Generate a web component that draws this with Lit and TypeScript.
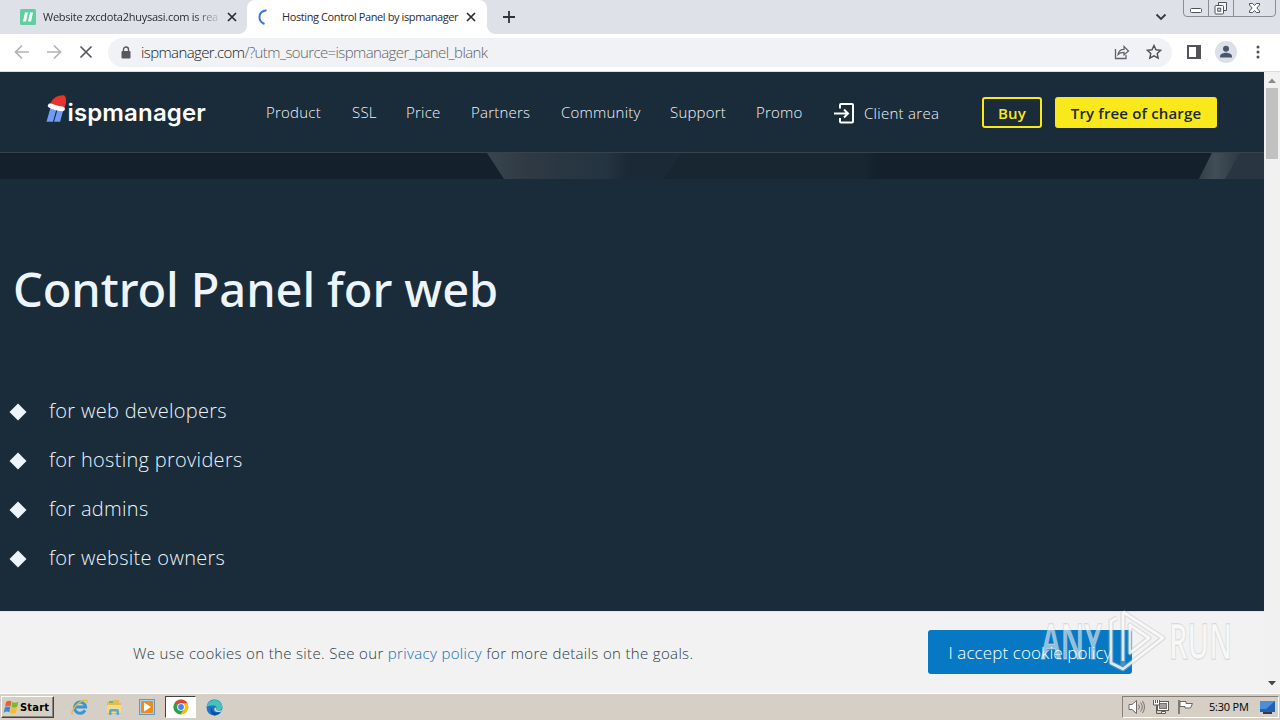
import { LitElement, css, html, svg } from "lit";
import { customElement, property } from "lit/decorators.js";

interface NavItem {
  label: string;
  width: number;
}

const NAV_ITEMS: NavItem[] = [
  { label: "Product", width: 56 },
  { label: "SSL", width: 24 },
  { label: "Price", width: 35 },
  { label: "Partners", width: 60 },
  { label: "Community", width: 79 },
  { label: "Support", width: 56 },
  { label: "Promo", width: 46 },
];

const AUDIENCES = [
  "for web developers",
  "for hosting providers",
  "for admins",
  "for website owners",
];

const cross = (size: number, stroke: number) => svg`
  <svg width=${size} height=${size} viewBox="0 0 10 10">
    <path d="M1 1L9 9M9 1L1 9" stroke="currentColor" stroke-width=${stroke} fill="none" />
  </svg>
`;

@customElement("browser-tabs")
export class BrowserTabs extends LitElement {
  render() {
    return html`
      <div class="tab">
        <svg width="16" height="16" viewBox="0 0 16 16">
          <rect width="16" height="16" rx="1.5" fill="#5fcf9f" />
          <path d="M5 3.500h3L6 12.500H3zM10 3.500h3l-2 9H8z" fill="#fff" />
        </svg>
        <span class="title faded">Website zxcdota2huysasi.com is rea</span>
        <span class="close">${cross(10, 1.7)}</span>
      </div>
      <div class="tab active">
        <svg width="16" height="16" viewBox="0 0 16 16">
          <path d="M8.500 1.200C-.5 2.500-.5 12 6.500 15" stroke="#3c78d8" stroke-width="2" fill="none" />
        </svg>
        <span class="title">Hosting Control Panel by ispmanager</span>
        <span class="close">${cross(10, 1.7)}</span>
      </div>
      <svg class="plus" width="12" height="12" viewBox="0 0 12 12">
        <path d="M6 0v12M0 6h12" stroke="#303238" stroke-width="1.8" />
      </svg>
      <svg class="chevron" width="12" height="8" viewBox="0 0 12 8">
        <path d="M1.500 1.500L6 6l4.500-4.500" stroke="#35383d" stroke-width="1.8" fill="none" />
      </svg>
      <svg class="controls" width="94" height="18" viewBox="0 0 94 18">
        <path
          d="M.5 0v13q0 3.500 3.500 3.500h85q3.500 0 3.500-3.500V0M25.500 0v16M50.500 0v16"
          stroke="#8a8d95"
          fill="none"
        />
        <rect x="7.500" y="8.500" width="11" height="4" rx="1" fill="#fff" stroke="#50535b" />
        <path d="M35.500 5.500v-3h8v8h-3" fill="#f6f6f8" stroke="#50535b" />
        <rect x="32" y="5.500" width="8.500" height="8.500" rx="1" fill="#fff" stroke="#50535b" />
        <rect x="34.700" y="8.200" width="3" height="3" fill="#dee1e6" stroke="#50535b" />
        <path
          d="M66.500 3.500h3.200l1.800 2 1.800-2h3.200v1.500L73.800 8l2.700 3v1.500h-3.200l-1.800-2-1.800 2h-3.200V11l2.700-3-2.700-3z"
          fill="#fff"
          stroke="#50535b"
        />
      </svg>
    `;
  }

  static styles = css`
    :host {
      display: flex;
      height: 34px;
      background: #dee1e8;
      color: #2a2c30;
      font: 11px "Open Sans", sans-serif;
    }
    svg {
      display: block;
      flex: none;
    }
    .tab {
      display: flex;
      align-items: center;
      box-sizing: border-box;
      width: 247px;
      height: 34px;
      padding-left: 20px;
    }
    .active {
      position: relative;
      width: 240px;
      padding-left: 11px;
      background: #fff;
      border-radius: 8px 8px 0 0;
    }
    .active::before,
    .active::after {
      content: "";
      position: absolute;
      bottom: 0;
      width: 8px;
      height: 8px;
    }
    .active::before {
      left: -8px;
      background: radial-gradient(circle at 0 0, transparent 7.5px, #fff 8px);
    }
    .active::after {
      right: -8px;
      background: radial-gradient(circle at 100% 0, transparent 7.5px, #fff 8px);
    }
    .title {
      width: 176px;
      margin-left: 7px;
      padding-bottom: 1px;
      overflow: hidden;
      white-space: nowrap;
      letter-spacing: -0.26px;
    }
    .active .title {
      margin-left: 8px;
      width: 178px;
      letter-spacing: -0.4px;
    }
    .faded {
      mask-image: linear-gradient(90deg, #000 86%, transparent 102%);
    }
    .close {
      margin-left: 8px;
    }
    .active .close {
      margin-left: 6px;
    }
    .plus {
      margin: 11px 0 0 16px;
    }
    .chevron {
      margin: 13px 0 0 auto;
    }
    .controls {
      margin: 0 3px 0 16px;
    }
  `;
}

@customElement("browser-toolbar")
export class BrowserToolbar extends LitElement {
  render() {
    return html`
      <svg class="nav" width="94" height="18" viewBox="0 0 94 18">
        <path d="M15 9H2M8 2.500L1.500 9l6.500 6.500" stroke="#b1b4b8" stroke-width="1.700" fill="none" />
        <path d="M33 9h13M40 2.500L46.500 9 40 15.500" stroke="#b1b4b8" stroke-width="1.700" fill="none" />
        <path d="M66.500 3.500l11 11M77.500 3.500l-11 11" stroke="#55585c" stroke-width="1.700" fill="none" />
      </svg>
      <div class="address">
        <svg class="lock" width="10" height="13" viewBox="0 0 10 13">
          <path d="M2.500 6V3.500a2.500 2.500 0 0 1 5 0V6" stroke="#55585d" stroke-width="1.400" fill="none" />
          <rect x="0.500" y="5" width="9" height="7.500" rx="1" fill="#55585d" />
        </svg>
        <span class="url">ispmanager.com<span class="path">/?utm_source=ispmanager_panel_blank</span></span>
        <svg class="share" width="16" height="15" viewBox="0 0 16 15">
          <path d="M1.500 4v9.500h10.500V10" stroke="#5f6368" stroke-width="1.300" fill="none" />
          <path
            d="M4 9.500c.6-3.800 2.800-5.200 6-5.200V1.500L14.500 6 10 10V7.400C7.400 7.400 5.500 8 4 9.500z"
            stroke="#5f6368"
            stroke-width="1.200"
            fill="none"
          />
        </svg>
        <svg class="star" width="16" height="16" viewBox="0 0 16 16">
          <path
            d="M8 1.500l2 4.300 4.700.5-3.500 3.200 1 4.700L8 11.800l-4.200 2.400 1-4.700L1.300 6.300l4.700-.5z"
            stroke="#4e5156"
            stroke-width="1.400"
            fill="none"
          />
        </svg>
      </div>
      <svg class="panel" width="14" height="14" viewBox="0 0 14 14">
        <rect x="1" y="1" width="12" height="12" stroke="#525458" stroke-width="2" fill="#fff" />
        <rect x="9" y="1" width="4" height="12" fill="#525458" />
      </svg>
      <svg class="avatar" width="22" height="22" viewBox="0 0 22 22">
        <circle cx="11" cy="11" r="11" fill="#dcdfe6" />
        <circle cx="11" cy="7.800" r="3" fill="#4a5370" />
        <path d="M5 16.500v-1.200c0-2.500 4-3.500 6-3.500s6 1 6 3.500v1.200z" fill="#4a5370" />
      </svg>
      <svg class="dots" width="4" height="14" viewBox="0 0 4 14">
        <g fill="#4e5156">
          <circle cx="2" cy="2" r="1.500" />
          <circle cx="2" cy="7" r="1.500" />
          <circle cx="2" cy="12" r="1.500" />
        </g>
      </svg>
    `;
  }

  static styles = css`
    :host {
      display: flex;
      align-items: center;
      box-sizing: border-box;
      height: 38px;
      padding-bottom: 1px;
      background: #fff;
      border-bottom: 1px solid #d9dde2;
    }
    svg {
      display: block;
      flex: none;
    }
    .nav {
      margin-left: 14px;
    }
    .address {
      display: flex;
      align-items: center;
      box-sizing: border-box;
      width: 1064px;
      height: 29px;
      padding-left: 13px;
      background: #f0f2f5;
      border-radius: 15px;
    }
    .url {
      margin-left: 10px;
      color: #202124;
      font: 300 15px "Open Sans", sans-serif;
      letter-spacing: -0.61px;
    }
    .path {
      color: #5f6368;
    }
    .share {
      margin-left: auto;
    }
    .star {
      margin: 0 10px 0 16px;
    }
    .panel {
      margin-left: 15px;
    }
    .avatar {
      margin-left: 14px;
    }
    .dots {
      margin-left: 19px;
    }
  `;
}

@customElement("site-header")
export class SiteHeader extends LitElement {
  render() {
    return html`
      <div class="logo">
        <svg width="22" height="32" viewBox="0 0 22 32">
          <path d="M4.500 14h6.500L7.200 28H0.500zM12 15h6l-3.500 13H8.300z" fill="#6f9bf5" />
          <path d="M4 12C5 4.500 12 .5 18.500 1c3 2.500 2.500 8 0 14z" fill="#e5352d" />
          <path
            d="M3 9.500C5.500 8.500 9 11.500 17 12.500c3.500 1 3 5-.5 4.700C11 16.600 7 16 3 13.500 1.300 12.500 1.500 10.500 3 9.500z"
            fill="#fff"
          />
        </svg>
        <span>ispmanager</span>
      </div>
      <nav>
        ${NAV_ITEMS.map(
          (item) => html`<a style="width:${item.width}px">${item.label}</a>`
        )}
      </nav>
      <div class="client">
        <svg width="22" height="22" viewBox="0 0 22 22">
          <path
            d="M7 6.500V3q0-1 1-1h11q1 0 1 1v16.500q0 1-1 1H8q-1 0-1-1V16M1 11.500h14M11 7.500l4 4-4 4"
            stroke="#fff"
            stroke-width="2"
            fill="none"
          />
        </svg>
        <span>Client area</span>
      </div>
      <a class="button buy">Buy</a>
      <a class="button try">Try free of charge</a>
    `;
  }

  static styles = css`
    :host {
      display: flex;
      align-items: center;
      box-sizing: border-box;
      height: 81px;
      background: #1a2b39;
      border-bottom: 1px solid #35434f;
      color: #f1f6fa;
      font: 300 15px "Open Sans", sans-serif;
      letter-spacing: 0.22px;
    }
    .logo {
      display: flex;
      flex: none;
      width: 160px;
      height: 36px;
      margin-left: 46px;
      color: #fff;
      font: 600 24px/38px Inter, sans-serif;
      letter-spacing: 0.15px;
    }
    nav {
      display: flex;
      gap: 30px;
      margin-left: 60px;
    }
    nav a {
      white-space: nowrap;
    }
    .client {
      display: flex;
      align-items: center;
      gap: 9px;
      width: 149px;
      margin: 2px 0 0 31px;
      white-space: nowrap;
      letter-spacing: 0.28px;
    }
    .button {
      box-sizing: border-box;
      height: 31px;
      border: 2px solid #f9e81c;
      border-radius: 3px;
      color: #f9e81c;
      font: 600 15px/29px "Open Sans", sans-serif;
      letter-spacing: 0.16px;
      text-align: center;
      white-space: nowrap;
    }
    .buy {
      width: 60px;
    }
    .try {
      width: 162px;
      margin-left: 13px;
      background: #f9e81c;
      color: #1a2b39;
    }
  `;
}

@customElement("cookie-bar")
export class CookieBar extends LitElement {
  render() {
    return html`
      <p>
        We use cookies on the site. See our <a>privacy policy</a> for more
        details on the goals.
      </p>
      <button>I accept cookie policy</button>
    `;
  }

  static styles = css`
    :host {
      display: flex;
      align-items: center;
      box-sizing: border-box;
      height: 82px;
      padding: 0 132px 2px;
      background: #f2f2f2;
      border-top: 1px solid #dfe4ec;
      color: #2c3a46;
      font: 300 15px "Open Sans", sans-serif;
    }
    p {
      flex: none;
      width: 796px;
      margin: 2px 0 0;
      text-indent: 1px;
      white-space: nowrap;
      letter-spacing: 0.34px;
    }
    a {
      color: #0e70b8;
    }
    button {
      flex: none;
      width: 204px;
      height: 44px;
      padding: 2px 0 0;
      border: 0;
      border-radius: 3px;
      background: #0779c4;
      color: #fff;
      font: 300 17px "Open Sans", sans-serif;
      letter-spacing: 0.1px;
      white-space: nowrap;
    }
  `;
}

@customElement("task-bar")
export class TaskBar extends LitElement {
  @property({ type: String }) time = "5:30 PM";

  render() {
    return html`
      <div class="start">
        <svg width="17" height="16" viewBox="0 0 17 16">
          <path d="M3 3c2-1.500 3.500-1.500 5.500-.5L7.500 7.500C5.500 6.500 4 6.500 2 8z" fill="#e8602c" />
          <path d="M9.300 3c2 1 4 1 6-.3l-1 5c-2 1.300-4 1.300-6 .3z" fill="#7ab83a" />
          <path d="M1.800 8.800c2-1.500 3.500-1.500 5.500-.5l-1 5C4.300 12.300 2.800 12.300.8 13.800z" fill="#3c87d2" />
          <path d="M8.100 8.800c2 1 4 1 6-.3l-1 5c-2 1.300-4 1.300-6 .3z" fill="#f6bd26" />
        </svg>
        <span>Start</span>
      </div>
      <svg class="ie" width="18" height="18" viewBox="0 0 18 18">
        <path d="M14 12.300A5.600 5.600 0 1 1 14.600 9H5" stroke="#3598d4" stroke-width="3" fill="none" />
        <path d="M2 15.500C-1 17 2 10 7 5.500 12 1.500 17.500.5 16 5" stroke="#e9b93a" stroke-width="1.300" fill="none" />
      </svg>
      <svg class="folder" width="18" height="18" viewBox="0 0 18 18">
        <path d="M2 4h5l1-2h6v3h2v11H2z" fill="#e0bd55" />
        <rect x="4" y="3" width="4" height="2" fill="#6fb566" />
        <path d="M2 7h14v8H2z" fill="#f3dc88" />
        <path d="M4 17v-4q0-2 2-2h6q2 0 2 2v4h-2.500v-3.500h-5V17z" fill="#5ba7d6" />
      </svg>
      <svg class="player" width="16" height="16" viewBox="0 0 16 16">
        <rect x="0.500" y="0.500" width="15" height="15" fill="#a9cfee" stroke="#6099c8" />
        <rect x="2" y="2" width="12" height="12" rx="1" fill="#ef8a1d" />
        <path d="M5 3.500l7 4.500-7 4.500z" fill="#fff" />
      </svg>
      <div class="running">
        <svg width="16" height="16" viewBox="0 0 16 16">
          <circle cx="8" cy="8" r="7.500" fill="#f4c20d" />
          <path d="M8 8L1.500 4.200A7.500 7.500 0 0 1 14.500 4.200H8z" fill="#db4437" />
          <path d="M8 8L1.500 4.200A7.500 7.500 0 0 0 7.500 15.500L11 10z" fill="#2f9e4f" />
          <circle cx="8" cy="8" r="3.800" fill="#fff" />
          <circle cx="8" cy="8" r="2.900" fill="#4285f4" />
        </svg>
      </div>
      <svg class="edge" width="17" height="17" viewBox="0 0 17 17">
        <circle cx="8.500" cy="8.500" r="8" fill="#1b76c8" />
        <path d="M.7 7.500A8 8 0 0 1 16.500 8c0 3-4 4.500-6.500 3 1.500-2.500 0-4.500-2.500-4.500S2 7 .7 7.500z" fill="#43c4b8" />
        <path d="M6 8.500c-1 4 3 6.500 8 4.500a8 8 0 0 1-5 3.400C5 15.500 3.500 11 6 8.500z" fill="#124c96" />
        <path d="M9 8.500c1.500 0 1.500 1.200 1 2.300 1.500 1.200 4.500 1.200 6.500-.3l-1 2c-3 1.200-7 .5-7.200-2 0-.8.200-1.600.7-2z" fill="#d5cfc6" />
      </svg>
      <div class="tray">
        <svg width="18" height="16" viewBox="0 0 18 16">
          <path d="M1 5.500h3L8.500 1.500v13L4 10.500H1z" fill="#fff" stroke="#6a6864" />
          <path d="M10.500 5.500q2 2.500 0 5M12.500 3.500q3.500 4.500 0 9M14.500 2q4 6 0 12" stroke="#77746f" fill="none" />
        </svg>
        <svg width="17" height="16" viewBox="0 0 17 16">
          <rect x="4.500" y="2.500" width="11" height="9" fill="#fff" stroke="#5d5b57" />
          <rect x="6.500" y="4.500" width="7" height="5" fill="#a3a29f" stroke="#77746f" />
          <path d="M.5 1h6v5h-6z" fill="#fff" />
          <path d="M.5 1v5h6V1M2.500 1v3M4.500 1v3M3.500 6v8.500h5" fill="none" stroke="#5d5b57" />
          <path d="M8.500 14.500v-2h4v2z" fill="#fff" stroke="#5d5b57" />
        </svg>
        <svg width="17" height="16" viewBox="0 0 17 16">
          <path d="M2 1v14" stroke="#55534f" stroke-width="1.300" />
          <path d="M3 2.500h6v2h6.500L13.500 9H8V7.500H3z" fill="#fff" stroke="#6a6864" />
        </svg>
        <span>${this.time}</span>
        <svg class="desktop" width="15" height="13" viewBox="0 0 15 13">
          <rect width="15" height="11" fill="#2260b4" />
          <path d="M0 0h15L6 8H0z" fill="#4d8ed8" />
          <rect x="3" y="11" width="9" height="2" fill="#38393c" />
        </svg>
      </div>
    `;
  }

  static styles = css`
    :host {
      display: flex;
      align-items: center;
      box-sizing: border-box;
      height: 27px;
      padding: 0 1px;
      background: #d5cfc6;
      border-top: 1px solid #fff;
      color: #000;
      font: 11px "Open Sans", sans-serif;
    }
    svg {
      display: block;
      flex: none;
    }
    .start {
      display: flex;
      align-items: center;
      box-sizing: border-box;
      width: 53px;
      height: 22px;
      padding-left: 1px;
      border: 1px solid;
      border-color: #fff #45433f #45433f #fff;
      box-shadow: inset -1px -1px #8b8780;
      font: bold 11px "DejaVu Sans Condensed", "DejaVu Sans", sans-serif;
      letter-spacing: 0.2px;
    }
    .ie {
      margin-left: 17px;
    }
    .folder {
      margin-left: 16px;
    }
    .player {
      margin-left: 16px;
    }
    .running {
      display: flex;
      align-items: center;
      justify-content: center;
      box-sizing: border-box;
      width: 31px;
      height: 22px;
      margin-left: 10px;
      background: #fff;
      border: 1px solid;
      border-color: #45433f #fff #fff #45433f;
    }
    .edge {
      margin-left: 10px;
    }
    .tray {
      display: flex;
      align-items: center;
      box-sizing: border-box;
      width: 157px;
      height: 22px;
      margin-left: auto;
      padding-left: 5px;
      gap: 7px;
      border: 1px solid;
      border-color: #85817a #fff #fff #85817a;
    }
    .tray span {
      width: 41px;
      margin: -1px 0 0 8px;
      white-space: nowrap;
      letter-spacing: -0.2px;
    }
    .desktop {
      margin-left: 3px;
    }
  `;
}

@customElement("app-root")
export class AppRoot extends LitElement {
  render() {
    return html`
      <browser-tabs></browser-tabs>
      <browser-toolbar></browser-toolbar>
      <div class="viewport">
        <div class="page">
          <site-header></site-header>
          <div class="banner">
            <svg width="1264" height="26" viewBox="0 0 1264 26">
              <defs>
                <linearGradient id="slab">
                  <stop offset="0" stop-color="#38444e" />
                  <stop offset="0.3" stop-color="#2e3944" />
                  <stop offset="0.85" stop-color="#243440" />
                  <stop offset="1" stop-color="#1a2935" />
                </linearGradient>
                <linearGradient id="haze">
                  <stop offset="0" stop-color="#172631" />
                  <stop offset="0.95" stop-color="#172631" />
                  <stop offset="1" stop-color="#14202c" />
                </linearGradient>
                <linearGradient id="edge">
                  <stop offset="0" stop-color="#323f49" />
                  <stop offset="0.4" stop-color="#424e57" />
                  <stop offset="1" stop-color="#2c3843" />
                </linearGradient>
              </defs>
              <rect width="1264" height="26" fill="#14202c" />
              <path d="M560 0h320v26H560z" fill="url(#haze)" />
              <path d="M620 0h62l-18 26h-44z" fill="#1a2935" />
              <path d="M487 0h140v26H504z" fill="url(#slab)" />
              <path d="M1212 0h52v26h-65z" fill="#293541" />
              <path d="M1212 0h28l-15 26h-26z" fill="url(#edge)" />
            </svg>
          </div>
          <main>
            <h1>Control Panel for web</h1>
            <ul>
              ${AUDIENCES.map((audience) => html`<li>${audience}</li>`)}
            </ul>
          </main>
          <cookie-bar></cookie-bar>
        </div>
        <div class="scrollbar">
          <svg width="8" height="5" viewBox="0 0 8 5">
            <path d="M0 5L4 0.500 8 5z" fill="#8b8b8b" />
          </svg>
          <div class="thumb"></div>
          <svg width="8" height="5" viewBox="0 0 8 5">
            <path d="M0 0L4 4.500 8 0z" fill="#45474a" />
          </svg>
        </div>
      </div>
      <task-bar></task-bar>
      <svg class="watermark" width="230" height="76" viewBox="0 0 230 76">
        <g class="word">
          <text x="4" y="51" textLength="61" lengthAdjust="spacingAndGlyphs">ANY</text>
          <text x="132" y="51" textLength="63" lengthAdjust="spacingAndGlyphs">RUN</text>
        </g>
        <g fill="none" stroke-linejoin="round">
          <path
            d="M86 4l40 26-40 31-12-6V13l6-3M93 17l19 13-19 15zM86 4v56"
            stroke="#b4b4b4"
            stroke-opacity="0.4"
            stroke-width="5"
          />
          <path
            d="M86 4l40 26-40 31-12-6V13l6-3M93 17l19 13-19 15zM86 4v49"
            stroke="#fff"
            stroke-opacity="0.8"
            stroke-width="2.800"
          />
        </g>
      </svg>
    `;
  }

  static styles = css`
    :host {
      display: flex;
      flex-direction: column;
      position: relative;
      width: 1280px;
      height: 720px;
      overflow: hidden;
      background: #fff;
    }
    .viewport {
      display: flex;
      height: 621px;
    }
    .page {
      width: 1264px;
      background: #1a2b39;
    }
    .banner {
      height: 26px;
    }
    .banner svg {
      display: block;
    }
    main {
      box-sizing: border-box;
      height: 432px;
      padding: 81px 0 0 13px;
    }
    h1 {
      margin: 0;
      color: #edf4fb;
      font: 500 47px/58px "Noto Sans", sans-serif;
      letter-spacing: -0.1px;
      white-space: nowrap;
    }
    ul {
      margin: 68px 0 0;
      padding: 0;
      list-style: none;
    }
    li {
      display: flex;
      align-items: center;
      height: 49px;
      color: #edf4fb;
      font: 300 20px "Open Sans", sans-serif;
      letter-spacing: 0.3px;
    }
    li::before {
      content: "";
      width: 12px;
      height: 12px;
      margin: 2px 25px 0 -1px;
      background: #edf4fb;
      transform: rotate(45deg);
    }
    .scrollbar {
      display: flex;
      flex-direction: column;
      align-items: center;
      box-sizing: border-box;
      width: 16px;
      padding: 6px 0 7px;
      background: #f1f1f1;
    }
    .thumb {
      width: 12px;
      height: 71px;
      margin: 5px 0 auto;
      background: #c1c1c1;
    }
    .watermark {
      position: absolute;
      left: 1037px;
      top: 608px;
      font: 600 49px "Open Sans", sans-serif;
    }
    .word {
      fill: #fff;
      fill-opacity: 0.55;
      stroke: #b8b8b8;
      stroke-opacity: 0.5;
      stroke-width: 1.4px;
      paint-order: stroke;
    }
  `;
}
